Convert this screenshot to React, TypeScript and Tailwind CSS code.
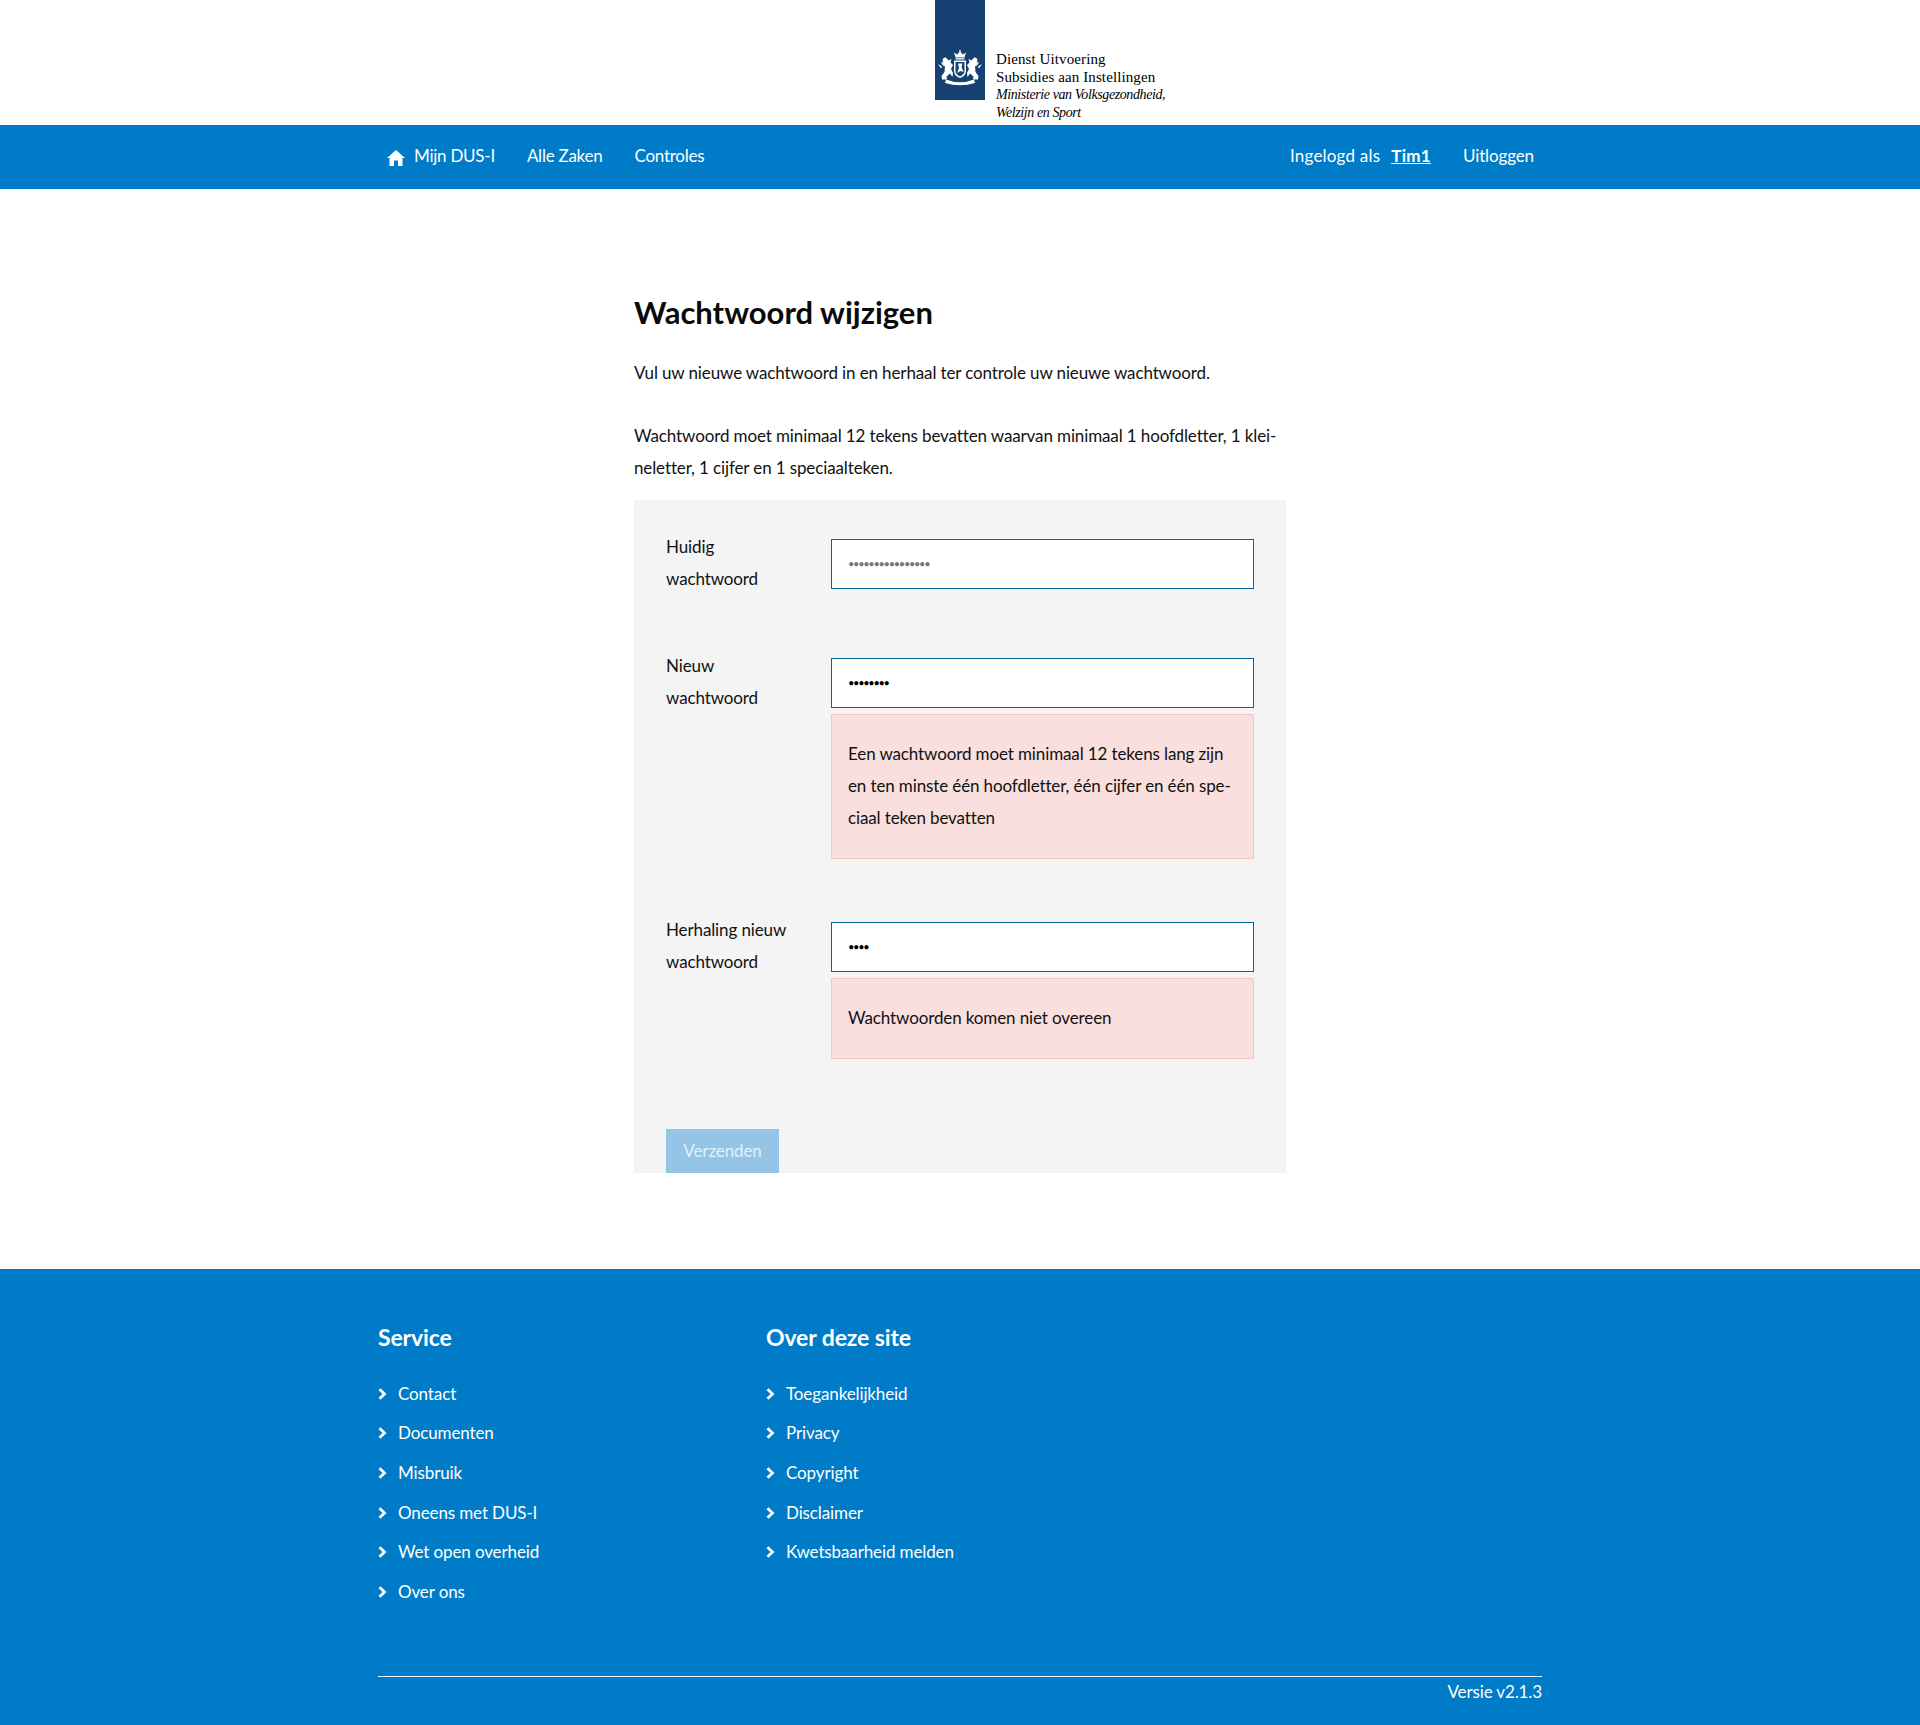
const sans = "font-['Lato','Noto_Sans',sans-serif]";

function Crest() {
  return (
    <svg viewBox="0 0 44 36" className="absolute left-[3px] top-[50px] w-[44px] h-[36px]" fill="#fff">
      <circle cx="22" cy="0.9" r="0.9" />
      <path d="M17.5 7.5 L16 2.5 L19 4.5 L22 1.5 L25 4.5 L28 2.5 L26.5 7.5 Z" />
      <rect x="17.5" y="8.2" width="9" height="1.3" />
      <path fillRule="evenodd" d="M16 10.5 H28 V21 Q28 26 22 28 Q16 26 16 21 Z M17.5 12 V21 Q17.5 24.5 22 26.4 Q26.5 24.5 26.5 21 V12 Z" />
      <path d="M20 13.5 L24.5 13.5 L23.5 17 L25.5 22 L22.5 21 L19 23 L21 18 Z" />
      <path d="M8 7.5 Q4.5 7.5 4.5 10.5 L5.5 12.5 L3 12 L5 15.5 L7 16.5 L6.5 22 L3.5 26 L4 29.5 L9 29.5 L8.5 26.5 L12 23.5 L14.5 27 L15 23 L13 19 L15 15 L12.5 12.5 L13.5 9 L10.5 10.5 Z" />
      <path d="M36 7.5 Q39.5 7.5 39.5 10.5 L38.5 12.5 L41 12 L39 15.5 L37 16.5 L37.5 22 L40.5 26 L40 29.5 L35 29.5 L35.5 26.5 L32 23.5 L29.5 27 L29 23 L31 19 L29 15 L31.5 12.5 L30.5 9 L33.5 10.5 Z" />
      <path d="M0 14 L4 16.5 L3 18.5 Z M44 14 L40 16.5 L41 18.5 Z" />
      <path d="M8 29.5 Q22 35 36 29.5 L37 33 Q22 37.5 7 33 Z" />
    </svg>
  );
}

function Chevron() {
  return (
    <svg viewBox="0 0 9 12" className="w-[9px] h-[12px] mr-[11px] shrink-0" fill="none" stroke="#fff" strokeWidth="2.8">
      <path d="M1.5 1.2 L6.5 6 L1.5 10.8" />
    </svg>
  );
}

function Home() {
  return (
    <svg viewBox="0 0 18 16" className="w-[18px] h-[16px] mr-[9px] mt-[3px]" fill="#fff">
      <path d="M9 0 L18 8 L15.5 8 V16 H11 V10.5 H7 V16 H2.5 V8 H0 Z" />
    </svg>
  );
}

function FooterList({ title, items, className }: { title: string; items: string[]; className: string }) {
  return (
    <div className={className}>
      <h2 className="text-[23px] font-bold leading-[32px] mb-[21px]">{title}</h2>
      <ul className="flex flex-col">
        {items.map((t) => (
          <li key={t} className="flex items-center h-[39.6px]">
            <Chevron />
            <span>{t}</span>
          </li>
        ))}
      </ul>
    </div>
  );
}

function Field({ label, value, placeholder, error }: { label: string[]; value?: string; placeholder?: string; error?: string[] }) {
  return (
    <div className="flex mb-[55px]">
      <label className="w-[165px] shrink-0">
        {label.map((l) => (
          <span key={l} className="block">{l}</span>
        ))}
      </label>
      <div className="w-[423px]">
        <input
          type="password"
          readOnly
          value={value ?? ""}
          placeholder={placeholder}
          className="block mt-2 w-full h-[50px] bg-white border border-[#01689b] px-4 pb-[2px] text-[11px] tracking-[-1.3px] text-black placeholder:text-[#777]"
        />
        {error && (
          <div className="mt-[6px] bg-[#f9dfdd] border border-[#f5c6c2] px-4 pt-[23px] pb-[24px]">
            {error.map((l) => (
              <span key={l} className="block">{l}</span>
            ))}
          </div>
        )}
      </div>
    </div>
  );
}

export default function App() {
  return (
    <div className={`${sans} text-[17px] tracking-[-0.12px] leading-[32px] text-[#111] bg-white min-h-[1725px] flex flex-col`}>
      <header className="h-[125px] flex justify-center">
        <div className="relative w-[50px] h-[100px] bg-[#154273]">
          <Crest />
          <div className="absolute left-[61px] top-[51px] w-[240px] font-['Liberation_Serif',serif] text-[15px] tracking-[0.1px] leading-[17.6px] text-black whitespace-nowrap">
            <div>Dienst Uitvoering</div>
            <div>Subsidies aan Instellingen</div>
            <div className="italic text-[14px] tracking-[-0.4px]">Ministerie van Volksgezondheid,</div>
            <div className="italic text-[14px] tracking-[-0.4px]">Welzijn en Sport</div>
          </div>
        </div>
      </header>

      <nav className="h-[64px] bg-[#007bc7] text-white">
        <div className="w-[1164px] mx-auto h-full flex items-center justify-between pl-[9px] pr-[8px] pb-[2px]">
          <div className="flex items-center tracking-[-0.25px]">
            <span className="flex items-center mr-[32px]"><Home />Mijn DUS-I</span>
            <span className="mr-[32px]">Alle Zaken</span>
            <span>Controles</span>
          </div>
          <div className="flex items-center">
            <span className="mr-[11px] tracking-[0.2px]">Ingelogd als</span>
            <span className="font-bold underline tracking-[0.3px] mr-[32px]">Tim1</span>
            <span>Uitloggen</span>
          </div>
        </div>
      </nav>

      <main className="w-[652px] mx-auto pt-[103px] pb-[96px]">
        <h1 className="text-[31px] tracking-normal font-bold leading-[40px] mb-[25px] text-[#0a0a0a]">Wachtwoord wijzigen</h1>
        <p className="mb-[31px]">Vul uw nieuwe wachtwoord in en herhaal ter controle uw nieuwe wachtwoord.</p>
        <p className="mb-[16px]">
          Wachtwoord moet minimaal 12 tekens bevatten waarvan minimaal 1 hoofdletter, 1 klei-
          <br />
          neletter, 1 cijfer en 1 speciaalteken.
        </p>
        <form className="bg-[#f4f4f4] pt-[31px] px-[32px]">
          <Field label={["Huidig", "wachtwoord"]} placeholder="••••••••••••••••" />
          <Field
            label={["Nieuw", "wachtwoord"]}
            value="abcdefgh"
            error={[
              "Een wachtwoord moet minimaal 12 tekens lang zijn",
              "en ten minste één hoofdletter, één cijfer en één spe-",
              "ciaal teken bevatten",
            ]}
          />
          <Field label={["Herhaling nieuw", "wachtwoord"]} value="abcd" error={["Wachtwoorden komen niet overeen"]} />
          <button type="button" className="block mt-[70px] w-[113px] h-[44px] bg-[#94c5e6] text-[#e3f0f9] leading-[44px]">
            Verzenden
          </button>
        </form>
      </main>

      <footer className="flex-1 bg-[#007bc7] text-white">
        <div className="w-[1164px] mx-auto pt-[52px]">
          <div className="flex h-[356px] border-b border-white">
            <FooterList
              className="w-[388px]"
              title="Service"
              items={["Contact", "Documenten", "Misbruik", "Oneens met DUS-I", "Wet open overheid", "Over ons"]}
            />
            <FooterList
              className="flex-1"
              title="Over deze site"
              items={["Toegankelijkheid", "Privacy", "Copyright", "Disclaimer", "Kwetsbaarheid melden"]}
            />
          </div>
          <div className="text-right -mt-px">Versie v2.1.3</div>
        </div>
      </footer>
    </div>
  );
}
